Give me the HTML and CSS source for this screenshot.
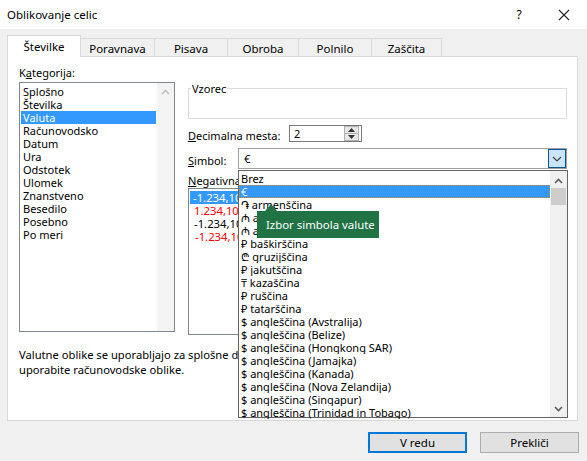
FILE: index.html
```html
<!DOCTYPE html>
<html lang="sl">
<head>
<meta charset="utf-8">
<title>Oblikovanje celic</title>
<link rel="stylesheet" href="styles.css">
</head>
<body>
<div class="dialog">
  <div class="titlebar">
    <span class="title">Oblikovanje celic</span>
    <span class="help">?</span>
    <span class="close"><svg width="12" height="12" viewBox="0 0 12 12"><path d="M1 1L11 11M11 1L1 11" stroke="#222" stroke-width="1.1" fill="none"/></svg></span>
  </div>

  <div class="tabs">
    <div class="tab active t1">Številke</div>
    <div class="tab t2">Poravnava</div>
    <div class="tab t3">Pisava</div>
    <div class="tab t4">Obroba</div>
    <div class="tab t5">Polnilo</div>
    <div class="tab t6">Zaščita</div>
  </div>

  <div class="panel">
    <div class="cols">
      <div class="left">
        <div class="label">K<u>a</u>tegorija:</div>
        <div class="listbox">
          <div class="items">
            <div class="item">Splošno</div>
            <div class="item">Številka</div>
            <div class="item sel">Valuta</div>
            <div class="item">Računovodsko</div>
            <div class="item">Datum</div>
            <div class="item">Ura</div>
            <div class="item">Odstotek</div>
            <div class="item">Ulomek</div>
            <div class="item">Znanstveno</div>
            <div class="item">Besedilo</div>
            <div class="item">Posebno</div>
            <div class="item">Po meri</div>
          </div>
          <div class="vscroll light">
            <svg class="arrow" width="9" height="6" viewBox="0 0 9 6"><path d="M1 5L4.5 1.5L8 5" stroke="#c2c2c2" stroke-width="1.6" fill="none"/></svg>
          </div>
        </div>
      </div>

      <div class="right">
        <div class="group"><span class="legend">Vzorec</span></div>
        <div class="row dec">
          <span class="lbl w-dec"><u>D</u>ecimalna mesta:</span>
          <div class="spin">
            <span class="val">2</span>
            <div class="spinbtns">
              <div class="sb"><svg width="7" height="4" viewBox="0 0 7 4"><path d="M0 4L3.5 0L7 4Z" fill="#333"/></svg></div>
              <div class="sb"><svg width="7" height="4" viewBox="0 0 7 4"><path d="M0 0L3.5 4L7 0Z" fill="#333"/></svg></div>
            </div>
          </div>
        </div>
        <div class="row sym">
          <span class="lbl w-sym"><u>S</u>imbol:</span>
          <div class="combo">
            <span class="val">€</span>
            <div class="dropbtn"><svg width="10" height="6" viewBox="0 0 10 6"><path d="M1 1L5 5L9 1" stroke="#444" stroke-width="1.2" fill="none"/></svg></div>
          </div>
        </div>
        <div class="lbl neg"><u>N</u>egativna števila:</div>
        <div class="neglist">
          <div class="nitem nsel">-1.234,10 €</div>
          <div class="nitem red">1.234,10 €</div>
          <div class="nitem">-1.234,10 €</div>
          <div class="nitem red ind">-1.234,10 €</div>
        </div>
      </div>
    </div>
    <p class="desc">Valutne oblike se uporabljajo za splošne denarne vrednosti. Za poravnavo decimalnih vejic v stolpcu<br>uporabite računovodske oblike.</p>
  </div>

  <div class="footer">
    <button class="btn default">V redu</button>
    <button class="btn">Prekliči</button>
  </div>

  <div class="dropdown">
    <div class="ditems">
      <div class="ditem">Brez</div>
      <div class="ditem dsel">€</div>
      <div class="ditem">֏ armenščina</div>
      <div class="ditem">₼ azerbajdžanščina</div>
      <div class="ditem">₼ azerbajdžanščina</div>
      <div class="ditem">₽ baškirščina</div>
      <div class="ditem">₾ gruzijščina</div>
      <div class="ditem">₽ jakutščina</div>
      <div class="ditem">₸ kazaščina</div>
      <div class="ditem">₽ ruščina</div>
      <div class="ditem">₽ tatarščina</div>
      <div class="ditem">$ angleščina (Avstralija)</div>
      <div class="ditem">$ angleščina (Belize)</div>
      <div class="ditem">$ angleščina (Hongkong SAR)</div>
      <div class="ditem">$ angleščina (Jamajka)</div>
      <div class="ditem">$ angleščina (Kanada)</div>
      <div class="ditem">$ angleščina (Nova Zelandija)</div>
      <div class="ditem">$ angleščina (Singapur)</div>
      <div class="ditem">$ angleščina (Trinidad in Tobago)</div>
    </div>
    <div class="vscroll dscroll">
      <svg class="arrow" width="9" height="6" viewBox="0 0 9 6"><path d="M1 5L4.5 1.5L8 5" stroke="#606060" stroke-width="1.6" fill="none"/></svg>
      <div class="thumb"></div>
      <div class="spacer"></div>
      <svg class="arrow" width="9" height="6" viewBox="0 0 9 6"><path d="M1 1L4.5 4.5L8 1" stroke="#606060" stroke-width="1.6" fill="none"/></svg>
    </div>
  </div>

  <div class="tooltip">Izbor simbola valute</div>
</div>
</body>
</html>
```

FILE: styles.css
```css
* { box-sizing: border-box; }
html, body { margin: 0; padding: 0; }
body {
  width: 587px;
  height: 461px;
  background: #f0f0f0;
  font-family: "Noto Sans", "Open Sans", sans-serif;
  font-size: 11px;
  color: #000;
  overflow: hidden;
}
.dialog {
  position: relative;
  width: 587px;
  height: 461px;
}
u { text-decoration: underline; text-underline-offset: 1px; }

/* title bar */
.titlebar {
  height: 29px;
  background: #fff;
  display: flex;
  align-items: center;
  padding-left: 7px;
}
.title { flex: 1; font-size: 11.5px; }
.help { width: 20px; text-align: center; margin-right: 29px; font-size: 12px; }
.close { width: 12px; height: 12px; margin-right: 17px; display: flex; }

/* tabs */
.tabs {
  height: 28px;
  display: flex;
  align-items: flex-end;
  padding-left: 7px;
  margin-bottom: -1px;
  position: relative;
  z-index: 2;
}
.tab {
  height: 19px;
  border: 1px solid #d9d9d9;
  border-bottom: none;
  margin-right: -1px;
  display: flex;
  align-items: center;
  justify-content: center;
  line-height: 13px;
  padding-top: 1px;
  font-size: 11.5px;
}
.tab.active {
  height: 22px;
  background: #fff;
  padding-bottom: 2px;
}
.t1 { width: 74px; }
.t2 { width: 75px; }
.t3 { width: 74px; }
.t4 { width: 72px; }
.t5 { width: 74px; }
.t6 { width: 71px; }

/* panel */
.panel {
  margin-left: 7px;
  width: 571px;
  height: 365px;
  background: #fff;
  border: 1px solid #d9d9d9;
  padding: 9px 10px 0 11px;
}
.cols { display: flex; }
.left { width: 157px; }
.label { line-height: 13px; height: 13px; margin-bottom: 3px; }
.listbox {
  height: 250px;
  border: 1px solid #828790;
  display: flex;
}
.items { flex: 1; padding: 2px 1px 0 1px; }
.item { height: 13px; line-height: 13px; padding-left: 2px; white-space: nowrap; }
.item.sel { background: #3399ff; color: #fff; }

.vscroll {
  width: 17px;
  background: #f0f0f0;
  display: flex;
  flex-direction: column;
  align-items: center;
}
.vscroll.light { background: #f4f4f4; }
.vscroll .arrow { margin-top: 6px; flex: none; }

.right { width: 379px; margin-left: 13px; }
.group {
  margin-top: 22px;
  height: 31px;
  border: 1px solid #dcdcdc;
  padding-left: 2px;
}
.legend {
  display: inline-block;
  background: #fff;
  line-height: 13px;
  margin-top: -7px;
  padding: 0 1px;
  vertical-align: top;
}
.row { display: flex; align-items: center; }
.dec { margin-top: 6px; height: 17px; }
.sym { margin-top: 6px; height: 21px; }
.lbl { line-height: 13px; white-space: nowrap; }
.w-dec { width: 101px; padding-top: 4px; }
.w-sym { width: 50px; padding-top: 3px; }
.spin {
  width: 73px;
  height: 17px;
  border: 1px solid #7a7a7a;
  display: flex;
  align-items: center;
  padding-left: 4px;
}
.spin .val { flex: 1; line-height: 13px; }
.spinbtns {
  width: 15px;
  height: 15px;
  display: flex;
  flex-direction: column;
  margin-right: 2px;
}
.sb {
  flex: 1;
  background: #e8e8e8;
  border: 1px solid #b0b0b0;
  display: flex;
  align-items: center;
  justify-content: center;
}
.sb + .sb { border-top: none; }
.combo {
  width: 329px;
  height: 21px;
  border: 1px solid #a0a0a0;
  display: flex;
  align-items: center;
  padding-left: 5px;
}
.combo .val { flex: 1; line-height: 13px; font-size: 11.5px; }
.dropbtn {
  width: 18px;
  height: 19px;
  background: #cce4f7;
  border: 1px solid #005499;
  display: flex;
  align-items: center;
  justify-content: center;
}
.neg { margin-top: 5px; height: 13px; }
.neglist {
  margin-top: 1px;
  height: 147px;
  border: 1px solid #828790;
  padding: 2px 1px 0 1px;
}
.nitem { height: 13px; line-height: 13px; padding-left: 4px; white-space: nowrap; font-size: 11.3px; }
.nitem.nsel { background: #3399ff; color: #fff; padding-left: 3px; }
.nitem.red { color: #ff0000; }
.nitem.ind { padding-left: 5px; }

.desc {
  margin: 12px 0 0 0;
  line-height: 15px;
  white-space: nowrap;
  overflow: hidden;
  font-size: 11.2px;
}

/* footer buttons */
.footer {
  display: flex;
  justify-content: flex-end;
  gap: 13px;
  padding-right: 8px;
  margin-top: 11px;
}
.btn {
  width: 99px;
  height: 21px;
  background: #e1e1e1;
  border: 1px solid #adadad;
  font-family: inherit;
  font-size: 11.5px;
  color: #000;
  padding: 0;
  line-height: 13px;
}
.btn.default { border: 2px solid #0078d7; }

/* dropdown overlay */
.dropdown {
  position: absolute;
  left: 238px;
  top: 170px;
  width: 330px;
  height: 248px;
  background: #fff;
  border: 1px solid #646464;
  display: flex;
  z-index: 5;
}
.ditems { flex: 1; padding-top: 1px; }
.ditem {
  height: 13px;
  line-height: 13px;
  padding-left: 2px;
  white-space: nowrap;
  overflow: hidden;
  font-size: 11px;
}
.ditem.dsel {
  background: #3399ff;
  color: #fff;
  border: 1px dotted #d58a3a;
  padding-left: 1px;
  line-height: 11px;
}
.dscroll { width: 17px; }
.dscroll .arrow { margin-top: 7px; }
.thumb {
  width: 15px;
  height: 17px;
  background: #cdcdcd;
  margin-top: 4px;
}
.spacer { flex: 1; }
.dscroll .arrow:last-child { margin: 0 0 5px 0; }

/* tooltip */
.tooltip {
  position: absolute;
  left: 257px;
  top: 211px;
  width: 122px;
  height: 27px;
  background: #217346;
  color: #fff;
  line-height: 27px;
  padding-left: 9px;
  font-size: 11.4px;
  white-space: nowrap;
  z-index: 6;
}
.tooltip::before {
  content: "";
  position: absolute;
  left: 8px;
  top: -7px;
  border-left: 6px solid transparent;
  border-right: 6px solid transparent;
  border-bottom: 7px solid #217346;
}
```
